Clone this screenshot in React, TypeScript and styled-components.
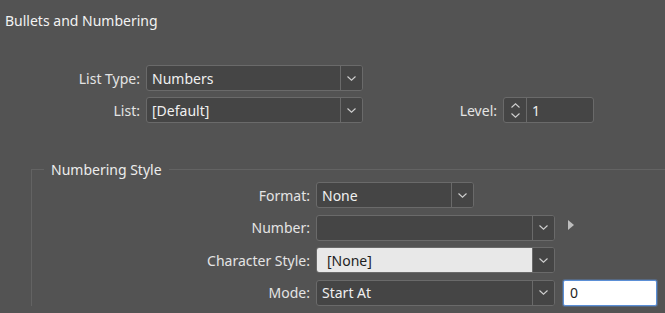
import React from "react";
import styled, { createGlobalStyle } from "styled-components";

const Global = createGlobalStyle`
  html, body { margin: 0; padding: 0; background: #535353; }
  body { font-family: "Noto Sans", "Open Sans", sans-serif; font-size: 14px; color: #e6e6e6; }
  * { box-sizing: border-box; }
`;

const Page = styled.div`
  width: 665px;
  height: 313px;
  overflow: hidden;
  background: #535353;
`;

const Title = styled.div`
  padding: 11px 0 0 5px;
  line-height: 19px;
  color: #f2f2f2;
`;

const TopGrid = styled.div`
  display: grid;
  grid-template-columns: 140px 217px 128px 91px;
  column-gap: 6px;
  row-gap: 6px;
  margin-top: 35px;
  align-items: center;
`;

const Label = styled.div`
  text-align: right;
  color: #e4e4e4;
  line-height: 19px;
  white-space: nowrap;
`;

const SelectBox = styled.div<{ $w?: number }>`
  display: flex;
  height: 26px;
  width: ${(p) => (p.$w ? `${p.$w}px` : "100%")};
  border: 1px solid #6a6a6a;
  border-radius: 3px;
  background: #454545;
  overflow: hidden;
`;

const SelectValue = styled.div<{ $light?: boolean }>`
  flex: 1;
  display: flex;
  align-items: center;
  padding-left: ${(p) => (p.$light ? "10px" : "5px")};
  background: ${(p) => (p.$light ? "#e8e8e8" : "transparent")};
  color: ${(p) => (p.$light ? "#1e1e1e" : "#f0f0f0")};
  white-space: nowrap;
`;

const ArrowCell = styled.div`
  width: 22px;
  flex: none;
  border-left: 1px solid #6a6a6a;
  display: flex;
  align-items: center;
  justify-content: center;
  background: #454545;
`;

const SpinCell = styled.div`
  width: 23px;
  flex: none;
  border-right: 1px solid #6a6a6a;
  display: flex;
  flex-direction: column;
  align-items: center;
  justify-content: center;
  gap: 5px;
`;

const Group = styled.fieldset`
  margin: 37px 0 0 31px;
  padding: 3px 0 0 0;
  border: none;
  border-top: 1px solid #636363;
  border-left: 1px solid #636363;
  min-width: 0;
`;

const Legend = styled.legend`
  margin-left: 12px;
  padding: 0 7px;
  line-height: 19px;
  color: #ececec;
`;

const GroupGrid = styled.div`
  display: grid;
  grid-template-columns: 278px 239px auto;
  column-gap: 6px;
  row-gap: 6.5px;
  align-items: center;
`;

const Triangle = styled.div`
  margin-left: 7px;
  margin-top: -6px;
  width: 0;
  height: 0;
  border-top: 5px solid transparent;
  border-bottom: 5px solid transparent;
  border-left: 6px solid #bdbdbd;
`;

const TextInput = styled.div`
  margin-left: 2px;
  width: 94px;
  height: 26px;
  background: #ffffff;
  border: 1px solid #5b8fd6;
  box-shadow: 0 0 0 1px rgba(91, 143, 214, 0.35);
  border-radius: 2px;
  color: #1e1e1e;
  display: flex;
  align-items: center;
  padding-left: 6px;
`;

const Chevron = ({ up }: { up?: boolean }) => (
  <svg width="9" height="5" viewBox="0 0 9 5">
    <path
      d={up ? "M0.5 4.5 L4.5 0.8 L8.5 4.5" : "M0.5 0.5 L4.5 4.2 L8.5 0.5"}
      fill="none"
      stroke="#cfcfcf"
      strokeWidth="1.1"
    />
  </svg>
);

const Select = ({ value, w, light }: { value: string; w?: number; light?: boolean }) => (
  <SelectBox $w={w}>
    <SelectValue $light={light}>{value}</SelectValue>
    <ArrowCell>
      <Chevron />
    </ArrowCell>
  </SelectBox>
);

export default function App() {
  return (
    <Page>
      <Global />
      <Title>Bullets and Numbering</Title>
      <TopGrid>
        <Label>List Type:</Label>
        <Select value="Numbers" />
        <div />
        <div />
        <Label>List:</Label>
        <Select value="[Default]" />
        <Label>Level:</Label>
        <SelectBox>
          <SpinCell>
            <Chevron up />
            <Chevron />
          </SpinCell>
          <SelectValue>1</SelectValue>
        </SelectBox>
      </TopGrid>
      <Group>
        <Legend>Numbering Style</Legend>
        <GroupGrid>
          <Label>Format:</Label>
          <Select value="None" w={158} />
          <div />
          <Label>Number:</Label>
          <Select value="" />
          <Triangle />
          <Label>Character Style:</Label>
          <Select value="[None]" light />
          <div />
          <Label>Mode:</Label>
          <Select value="Start At" />
          <TextInput>0</TextInput>
        </GroupGrid>
      </Group>
    </Page>
  );
}
